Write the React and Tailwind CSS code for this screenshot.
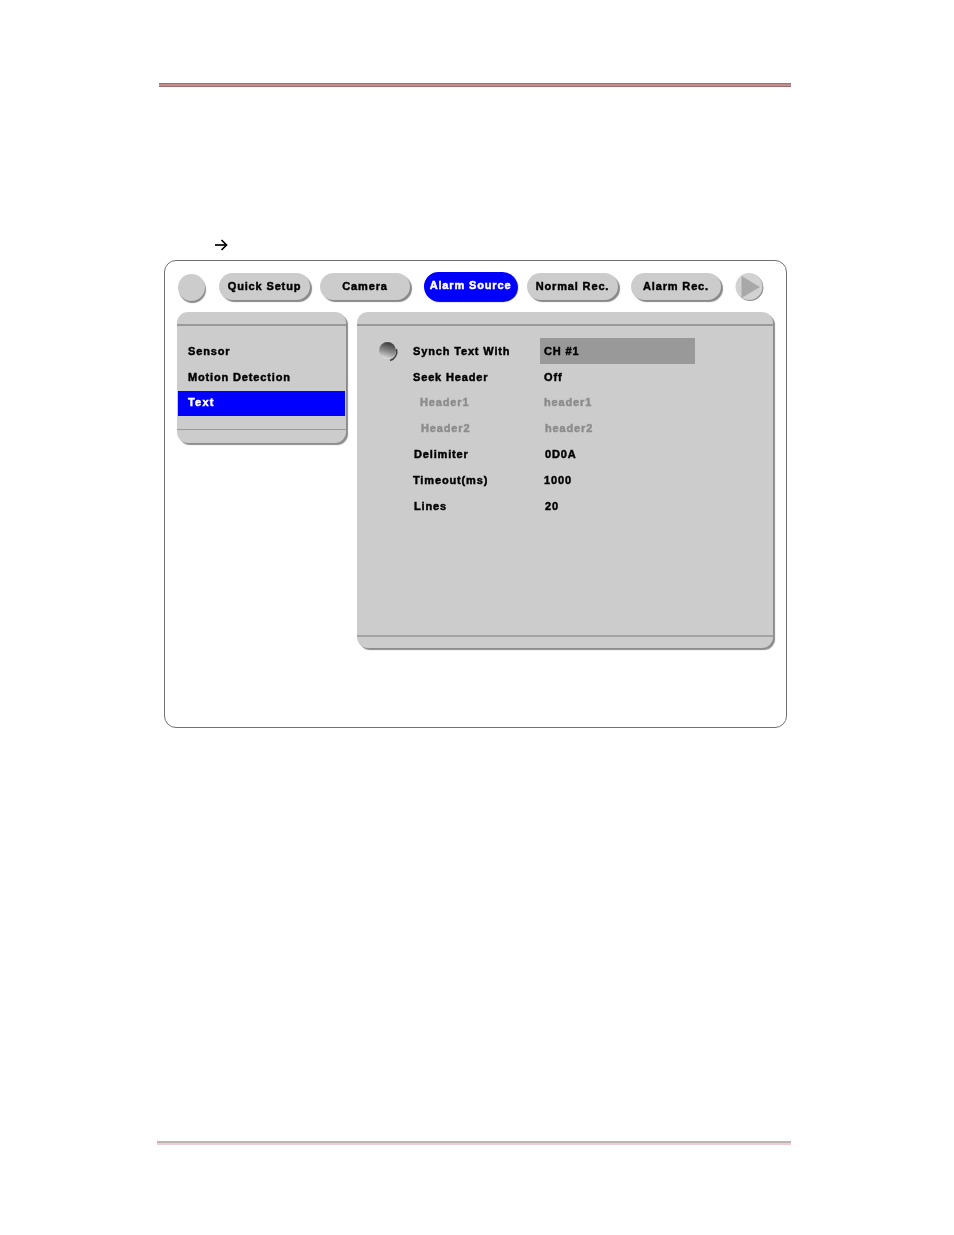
import React from "react";

const TABS = [
  { label: "Quick Setup", width: "w-[91px]", gap: "ml-[14px]" },
  { label: "Camera", width: "w-[90px]", gap: "ml-[10px]" },
  { label: "Alarm Source", width: "w-[93px]", gap: "ml-[14px]", active: true },
  { label: "Normal Rec.", width: "w-[91px]", gap: "ml-[10px]" },
  { label: "Alarm Rec.", width: "w-[90px]", gap: "ml-[13px]" },
];

const MENU = [
  { label: "Sensor" },
  { label: "Motion Detection" },
  { label: "Text", active: true },
];

const ROWS = [
  { label: "Synch Text With", value: "CH #1", labelPad: "pl-[56px]", valuePad: "pl-[4px]", selected: true },
  { label: "Seek Header", value: "Off", labelPad: "pl-[56px]", valuePad: "pl-[4px]" },
  { label: "Header1", value: "header1", labelPad: "pl-[63px]", valuePad: "pl-[4px]", disabled: true, raised: true },
  { label: "Header2", value: "header2", labelPad: "pl-[64px]", valuePad: "pl-[5px]", disabled: true, raised: true },
  { label: "Delimiter", value: "0D0A", labelPad: "pl-[57px]", valuePad: "pl-[5px]", raised: true },
  { label: "Timeout(ms)", value: "1000", labelPad: "pl-[56px]", valuePad: "pl-[4px]", raised: true },
  { label: "Lines", value: "20", labelPad: "pl-[57px]", valuePad: "pl-[5px]", raised: true },
];

const Ball = () => (
  <svg width="21" height="21" viewBox="0 0 21 21" className="absolute left-[21px] top-[-10px]">
    <defs>
      <linearGradient id="ball" x1="0.6" y1="0.1" x2="0.35" y2="1">
        <stop offset="0" stopColor="#454545" />
        <stop offset="0.5" stopColor="#8c8c8c" />
        <stop offset="1" stopColor="#e2e2e2" />
      </linearGradient>
    </defs>
    <path d="M18.5 8a9.5 9.5 0 0 1-6.5 11.5" fill="none" stroke="#444" strokeWidth="1.6" />
    <circle cx="9.5" cy="9.5" r="8.5" fill="url(#ball)" />
  </svg>
);

const PlayButton = () => (
  <svg width="30" height="30" viewBox="0 0 30 30" className="ml-[14px]">
    <circle cx="15" cy="15.5" r="13.5" fill="#8f8f8f" />
    <circle cx="14" cy="14.5" r="13.5" fill="#d2d2d2" />
    <path d="M6.5 4 L25 15 L6.5 26 Z" fill="#a8a8a8" />
  </svg>
);

const App = () => (
  <div className="h-[1235px] w-[954px] overflow-hidden bg-white font-['Liberation_Sans',sans-serif] text-[11px] font-bold tracking-[0.85px] text-black [-webkit-text-stroke:0.45px_currentColor]">
    <div className="ml-[159px] mt-[83px] h-[4px] w-[632px] border-y border-[#a86c6e] bg-[#bd8f8f]" />

    <div className="ml-[215px] mt-[152px] h-[13px]">
      <svg width="13" height="12" viewBox="0 0 13 12" fill="none" stroke="#000" strokeWidth="1.7">
        <path d="M0 6H11.5" />
        <path d="M6.5 1L11.5 6L6.5 11" />
      </svg>
    </div>

    <div className="ml-[164px] mt-[8px] h-[468px] w-[623px] rounded-[12px] border border-[#707070] bg-white pl-[12px] pt-[11px] blur-[0.3px]">
      <div className="flex h-[30px] items-start pl-[1px]">
        <div className="mt-[2px] h-[27px] w-[27px] rounded-full bg-[#ccc] shadow-[1px_2px_1px_#888]" />
        {TABS.map((tab) => (
          <div
            key={tab.label}
            className={`${tab.width} ${tab.gap} flex items-center justify-center rounded-full ${
              tab.active
                ? "h-[29px] bg-[#0000ff] pb-[3px] text-white shadow-[1px_1px_1px_#00008c]"
                : "mt-[1px] h-[27px] bg-[#ccc] pb-[1px] shadow-[2px_2px_1px_#888]"
            }`}
          >
            {tab.label}
          </div>
        ))}
        <PlayButton />
      </div>

      <div className="mt-[10px] flex items-start">
        <section className="h-[131px] w-[169px] rounded-[11px] bg-[#ccc] shadow-[2px_2px_1px_#8c8c8c]">
          <div className="h-[14px] border-b-2 border-[#999]" />
          <ul className="pt-[12px]">
            {MENU.map((item) => (
              <li
                key={item.label}
                className={`flex items-center ${
                  item.active
                    ? "mx-[1px] mb-[1px] mt-[1px] h-[25px] bg-[#0000ff] pb-[2px] pl-[10px] tracking-[1.2px] text-white"
                    : "h-[26px] pl-[11px]"
                }`}
              >
                {item.label}
              </li>
            ))}
          </ul>
          <div className="mt-[13px] border-b border-[#999]" />
        </section>

        <section className="ml-[11px] h-[336px] w-[416px] rounded-[11px] bg-[#ccc] shadow-[2px_2px_1px_#8c8c8c]">
          <div className="h-[14px] border-b-2 border-[#999]" />
          <div className="pt-[12px]">
            {ROWS.map((row) => (
              <div
                key={row.label}
                className={`relative flex h-[26px] items-center ${row.raised ? "pb-[1px]" : ""} ${row.disabled ? "text-[#8c8c8c]" : ""}`}
              >
                {row.selected && (
                  <div className="absolute left-0 top-1/2">
                    <Ball />
                  </div>
                )}
                <div className={`w-[183px] ${row.labelPad}`}>{row.label}</div>
                <div className={`flex h-[26px] w-[155px] items-center ${row.valuePad} ${row.selected ? "bg-[#999]" : ""}`}>
                  {row.value}
                </div>
              </div>
            ))}
          </div>
          <div className="mt-[115px] border-b-2 border-[#a3a3a3]" />
        </section>
      </div>
    </div>

    <div className="ml-[157px] mt-[413px] h-[4px] w-[634px] border-t-2 border-[#bdb5b5] bg-[#f0cccc]" />
  </div>
);

export default App;
